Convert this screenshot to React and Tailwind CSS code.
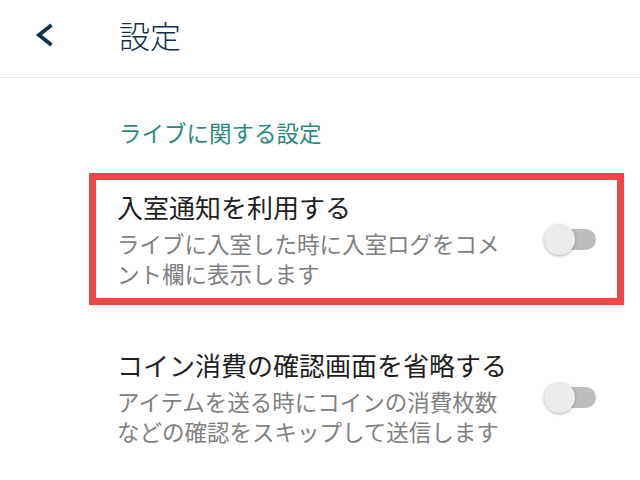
import React, { useState } from 'react'

const font = { fontFamily: '"Noto Sans CJK JP", "Noto Sans", sans-serif' }

const Toggle = ({ on, onChange }) => (
  <button
    type="button"
    onClick={() => onChange(!on)}
    className="relative w-[52px] h-[32px] shrink-0 flex items-center"
  >
    <span className={`absolute left-0 right-0 h-[21px] rounded-full ${on ? 'bg-[#8fd0c4]' : 'bg-[#bdbdbd]'}`} />
    <span
      className={`absolute top-[0.5px] w-[31px] h-[31px] rounded-full shadow-[0_1px_3px_rgba(0,0,0,0.3)] transition-all ${on ? 'left-[21px] bg-[#2a8a7c]' : 'left-0 bg-[#ececec]'}`}
    />
  </button>
)

const SettingRow = ({ title, lines, highlight }) => {
  const [on, setOn] = useState(false)
  return (
    <div
      className={`w-[535px] border-[7px] ${highlight ? 'border-[#f5434a]' : 'border-transparent'} pl-[21px] pr-[21px] pt-[10px] pb-[10px] flex items-center justify-between`}
    >
      <div className="flex flex-col">
        <div className="text-[26px] leading-[34px] text-[#1e1e1e] mb-[4px]">{title}</div>
        {lines.map((l) => (
          <div key={l} className="text-[22.5px] leading-[30px] text-[#808080]">{l}</div>
        ))}
      </div>
      <Toggle on={on} onChange={setOn} />
    </div>
  )
}

export default function App() {
  return (
    <div className="w-[640px] h-[480px] bg-white overflow-hidden" style={font}>
      <header className="h-[78px] border-b border-[#e8e8e8] flex items-center pb-[8px]">
        <button type="button" className="ml-[33px] w-[24px] h-[24px] flex items-center justify-center">
          <svg width="24" height="24" viewBox="0 0 24 24" fill="none">
            <path d="M18.5 2 L6 12 L18.5 22" stroke="#123047" strokeWidth="3.8" />
          </svg>
        </button>
        <h1 className="ml-[62px] text-[31px] leading-[40px] text-[#123047] font-light">設定</h1>
      </header>

      <main className="pl-[89px] pr-[16px]">
        <div className="pl-[30px] mt-[39px] text-[22.5px] leading-[30px] text-[#2a8a7c]">
          ライブに関する設定
        </div>

        <div className="mt-[26px] flex flex-col gap-[26px]">
          <SettingRow
            highlight
            title="入室通知を利用する"
            lines={['ライブに入室した時に入室ログをコメ', 'ント欄に表示します']}
          />
          <SettingRow
            title="コイン消費の確認画面を省略する"
            lines={['アイテムを送る時にコインの消費枚数', 'などの確認をスキップして送信します']}
          />
        </div>
      </main>
    </div>
  )
}
